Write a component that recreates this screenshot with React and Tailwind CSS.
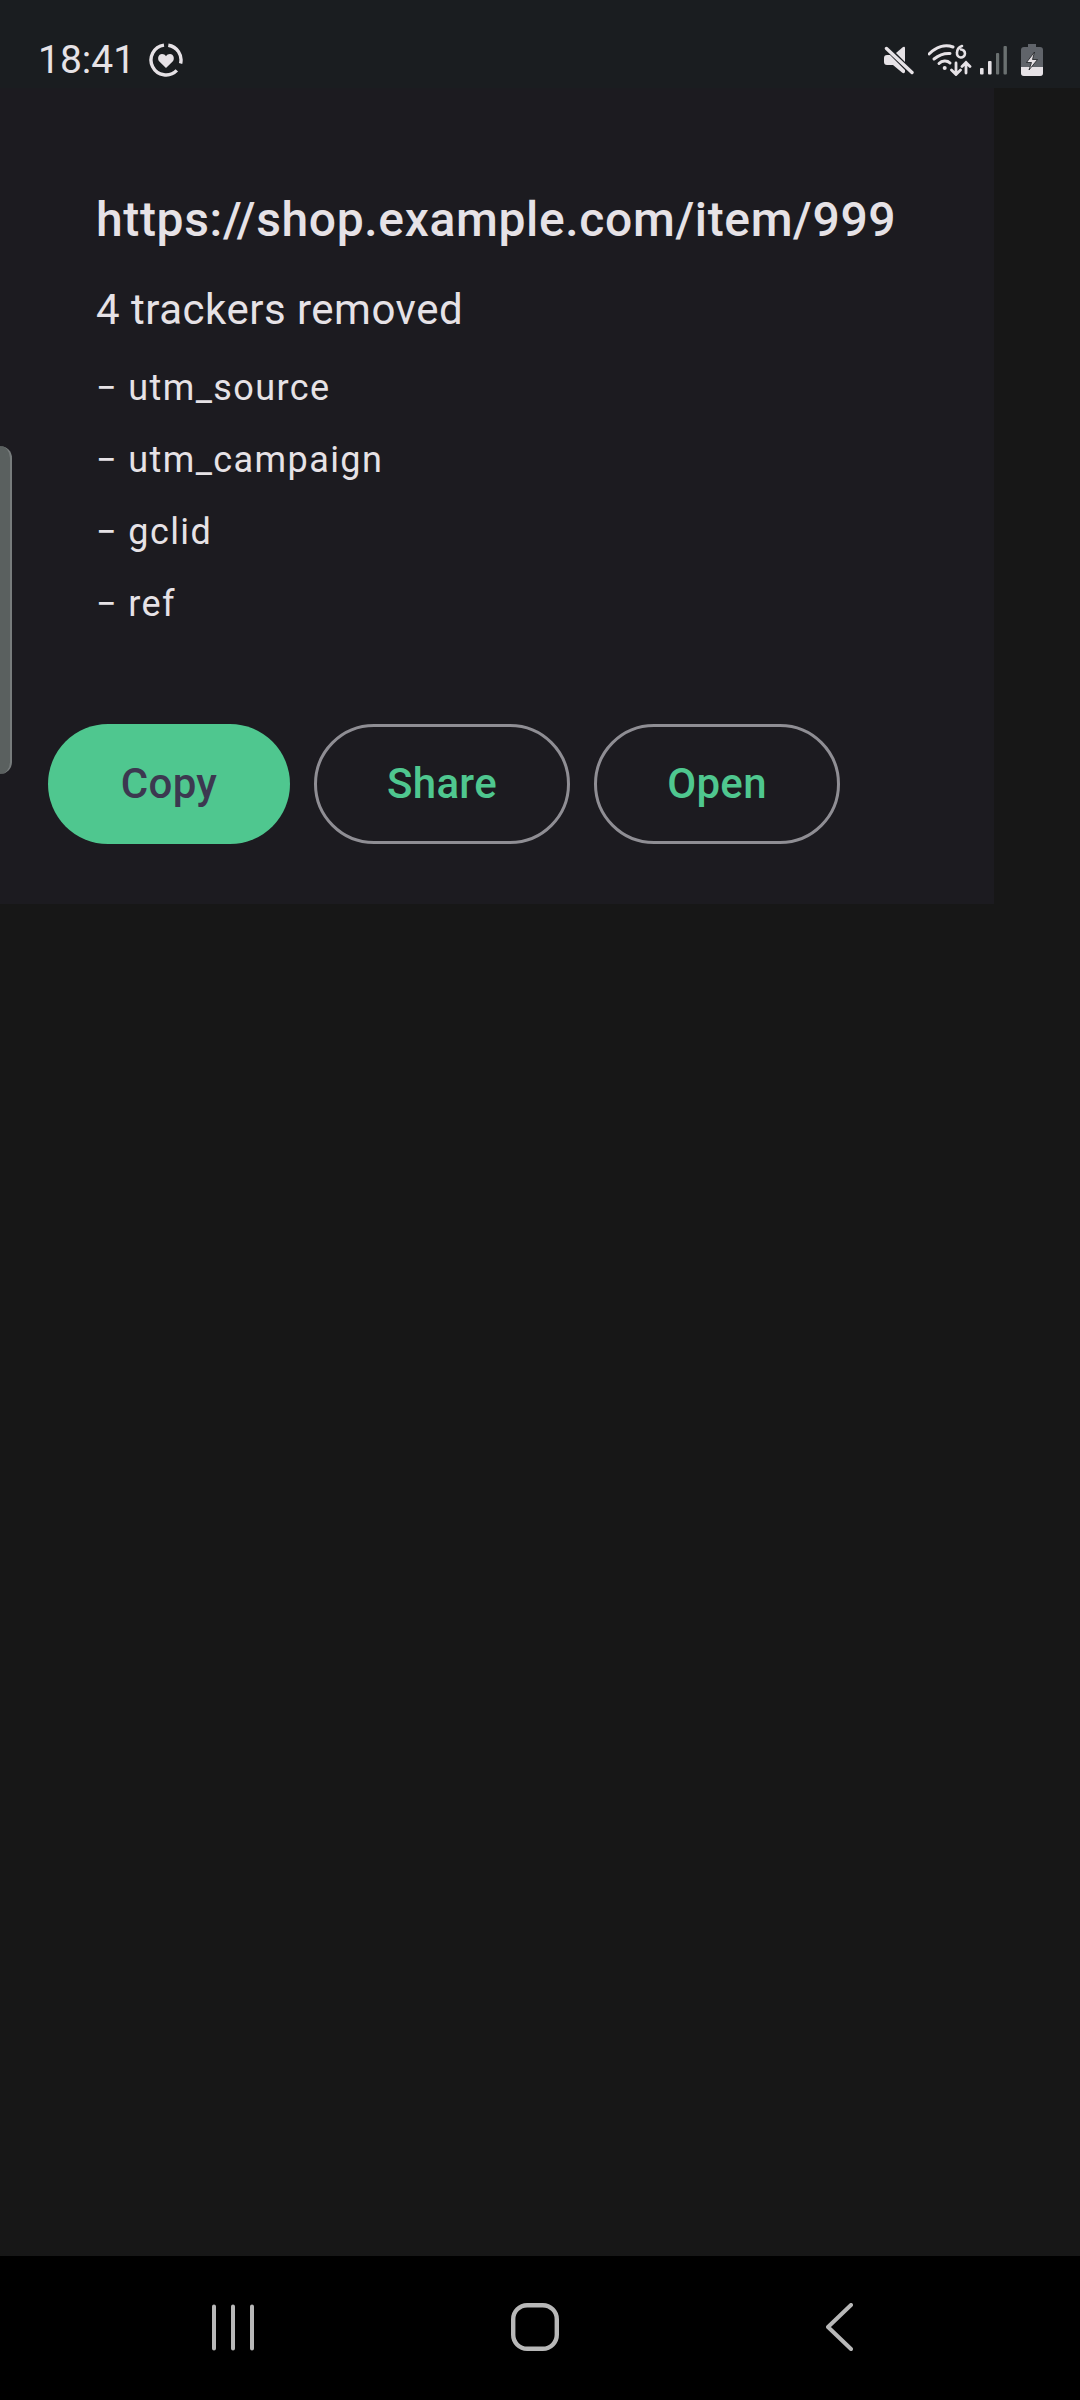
const trackers = ['utm_source', 'utm_campaign', 'gclid', 'ref'];

const HeartRing = () => (
  <svg width="34" height="34" viewBox="0 0 34 34" fill="none">
    <path d="M19.300 2.200A15 15 0 0 1 31.600 20.500M27.800 27.400A15 15 0 1 1 15 2.100" stroke="#e6e2e6" strokeWidth="3.400" />
    <path d="M17 25l-6.400-6.200C7.800 16 9.400 11 13 11c1.800 0 3.100 .9 4 2.300.9-1.400 2.200-2.300 4-2.300 3.600 0 5.200 5 2.400 7.800z" fill="#e6e2e6" />
  </svg>
);

const MuteIcon = () => (
  <svg width="30" height="30" viewBox="0 0 30 30" fill="#e6e2e6">
    <path d="M0 13q0-3 3-3h3l15 15v2q-1 2-3 .6L9 20H3q-3 0-3-3z" />
    <path d="M12 8l7-6q2-1 2 1v14z" />
    <path d="M2.500 3.500L28 27.500" stroke="#e6e2e6" strokeWidth="3.400" strokeLinecap="round" />
  </svg>
);

const WifiIcon = () => (
  <svg width="44" height="32" viewBox="0 0 44 32" fill="none" stroke="#e6e2e6" strokeLinecap="round">
    <path d="M1 10C8 3 17 0 25 3" strokeWidth="3" />
    <path d="M6 15c5-4 10-6 16-5.500" strokeWidth="3" />
    <path d="M11 19.500c3-3 8-3.500 11-.5" strokeWidth="3" />
    <circle cx="16.700" cy="24" r="2" fill="#e6e2e6" stroke="none" />
    <path d="M28 19v11M23.500 26l4.500 4.500 4.500-4.500M38 29V18.500M34 22.500l4-4 4 4" strokeWidth="2.800" />
    <path d="M34 2c-3 1-5 4-5 7a4 4 0 1 0 4-3.500" strokeWidth="2.600" />
  </svg>
);

const SignalIcon = () => (
  <svg width="27" height="29" viewBox="0 0 27 29">
    <rect x="0" y="22" width="3.600" height="6.500" rx="1" fill="#e6e2e6" />
    <rect x="8" y="15" width="3.600" height="13.500" rx="1" fill="#e6e2e6" />
    <rect x="16" y="7" width="3.200" height="21.500" rx="1" fill="#6a7070" />
    <rect x="23.500" y="0" width="3.400" height="28.500" rx="1" fill="#6a7070" />
  </svg>
);

const BatteryIcon = () => (
  <svg width="22" height="32" viewBox="0 0 22 32">
    <path d="M7 0h8v3h4c2 0 3 1 3 3v23c0 2-1 3-3 3H3c-2 0-3-1-3-3V6c0-2 1-3 3-3h4z" fill="#60646a" />
    <path d="M0 23h22v6c0 2-1 3-3 3H3c-2 0-3-1-3-3z" fill="#e6e2e6" />
    <path d="M13.500 8l-8 10.500h5L8 26l8.500-10.500h-5l2-7.500z" fill="#e6e2e6" stroke="#1a1d20" strokeWidth="0.800" />
  </svg>
);

export default function App() {
  return (
    <div className="relative flex h-[2400px] w-[1080px] flex-col overflow-hidden bg-[#171717] font-['Roboto',sans-serif]">
      {/* status bar */}
      <div className="flex h-[88px] shrink-0 items-center bg-[#1a1d20] pt-[32px] pr-[37px] pl-[38px]">
        <span className="text-[39px] leading-none text-[#e6e2e6]">18:41</span>
        <span className="ml-[14px] flex"><HeartRing /></span>
        <div className="ml-auto flex items-center">
          <MuteIcon />
          <span className="ml-[14px] flex"><WifiIcon /></span>
          <span className="ml-[8px] flex"><SignalIcon /></span>
          <span className="ml-[14px] flex"><BatteryIcon /></span>
        </div>
      </div>

      {/* sheet */}
      <div className="h-[816px] w-[994px] shrink-0 bg-[#1c1b20] pt-[104px]">
        <div className="pl-[96px]">
          <p className="text-[48px] leading-[56px] font-medium tracking-[0.65px] text-[#e6e2e6]">https://shop.example.com/item/999</p>
          <p className="mt-[34px] text-[42px] leading-[56px] tracking-[0.5px] text-[#e6e2e6]">4 trackers removed</p>
          <div className="mt-[26px] flex flex-col gap-[24px]">
            {trackers.map(t => (
              <p key={t} className="text-[36px] leading-[48px] tracking-[1.4px] text-[#e6e2e6]">− {t}</p>
            ))}
          </div>
        </div>
        <div className="mt-[96px] flex gap-[24px] pl-[48px]">
          <button className="flex h-[120px] w-[242px] items-center justify-center rounded-full bg-[#4fc78f] pb-[1px] text-[42px] font-medium tracking-[0.3px] text-[#3c3850]">Copy</button>
          <button className="flex h-[120px] w-[256px] items-center justify-center rounded-full border-[3px] border-[#8f8e94] pb-[1px] text-[42px] font-medium tracking-[0.3px] text-[#4fc78f]">Share</button>
          <button className="flex h-[120px] w-[246px] items-center justify-center rounded-full border-[3px] border-[#8f8e94] pb-[1px] text-[42px] font-medium tracking-[0.3px] text-[#4fc78f]">Open</button>
        </div>
      </div>

      {/* scroll handle */}
      <div className="absolute top-[446px] left-0 h-[328px] w-[12px] rounded-r-[12px] border-r-2 border-[#777c7c] bg-[#5a605f]" />

      {/* nav bar */}
      <div className="mt-auto flex h-[144px] shrink-0 items-center bg-black pb-[2px] pl-[212px]">
        <svg width="42" height="47" viewBox="0 0 42 47" stroke="#b8b8b8" strokeWidth="4" strokeLinecap="round">
          <path d="M2 2.500v42M21 2.500v42M40 2.500v42" />
        </svg>
        <svg className="ml-[257px]" width="48" height="48" viewBox="0 0 48 48" fill="none" stroke="#b8b8b8" strokeWidth="4.400">
          <rect x="2.200" y="2.200" width="43.600" height="43.600" rx="14" />
        </svg>
        <svg className="ml-[267px]" width="27" height="48" viewBox="0 0 27 48" fill="none" stroke="#b8b8b8" strokeWidth="4" strokeLinecap="round" strokeLinejoin="round">
          <path d="M25 2L2 24l23 22" />
        </svg>
      </div>
    </div>
  );
}
